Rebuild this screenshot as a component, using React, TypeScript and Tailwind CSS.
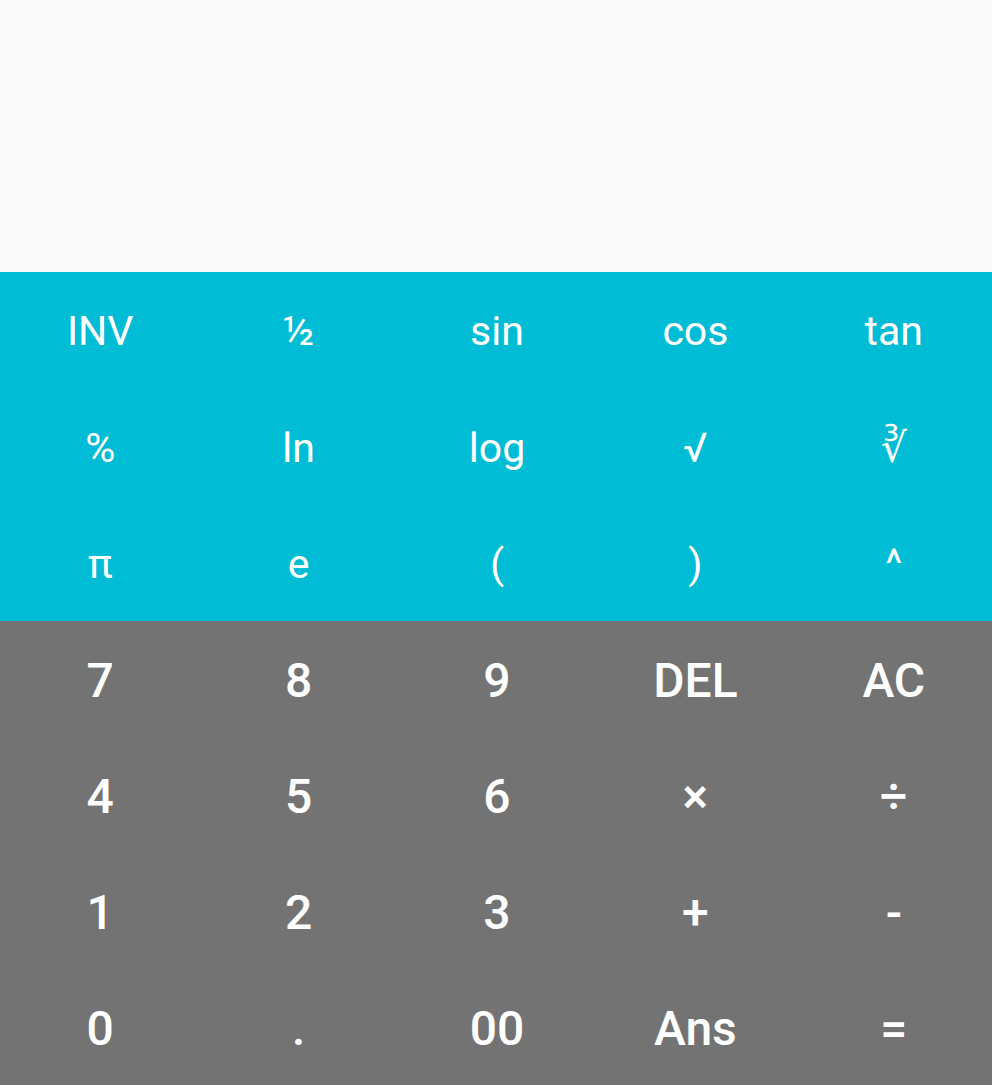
import React from 'react';

const sciKeys = [
  ['INV', '½', 'sin', 'cos', 'tan'],
  ['%', 'ln', 'log', '√', '∛'],
  ['π', 'e', '(', ')', '^'],
];

const numKeys = [
  ['7', '8', '9', 'DEL', 'AC'],
  ['4', '5', '6', '×', '÷'],
  ['1', '2', '3', '+', '-'],
  ['0', '.', '00', 'Ans', '='],
];

const Row: React.FC<{ keys: string[]; className: string }> = ({ keys, className }) => (
  <div className="flex-1 grid grid-cols-5">
    {keys.map((k) => (
      <button key={k} className={`flex items-center justify-center pt-[4px] pl-[2px] text-white ${className}`}>
        {k}
      </button>
    ))}
  </div>
);

const App: React.FC = () => {
  return (
    <div
      className="flex flex-col h-[1085px] w-full bg-[#fafafa]"
      style={{ fontFamily: 'Roboto, "Noto Sans", "DejaVu Sans", sans-serif' }}
    >
      { }
      <div className="h-[272px] bg-[#fafafa]" />

      <div className="flex flex-col h-[349px] bg-[#00bcd4]">
        {sciKeys.map((r, i) => (
          <Row key={i} keys={r} className="text-[41px] font-normal" />
        ))}
      </div>

      <div className="flex flex-col flex-1 bg-[#737373]">
        {numKeys.map((r, i) => (
          <Row key={i} keys={r} className="text-[48px] font-medium" />
        ))}
      </div>
    </div>
  );
};

export default App;
